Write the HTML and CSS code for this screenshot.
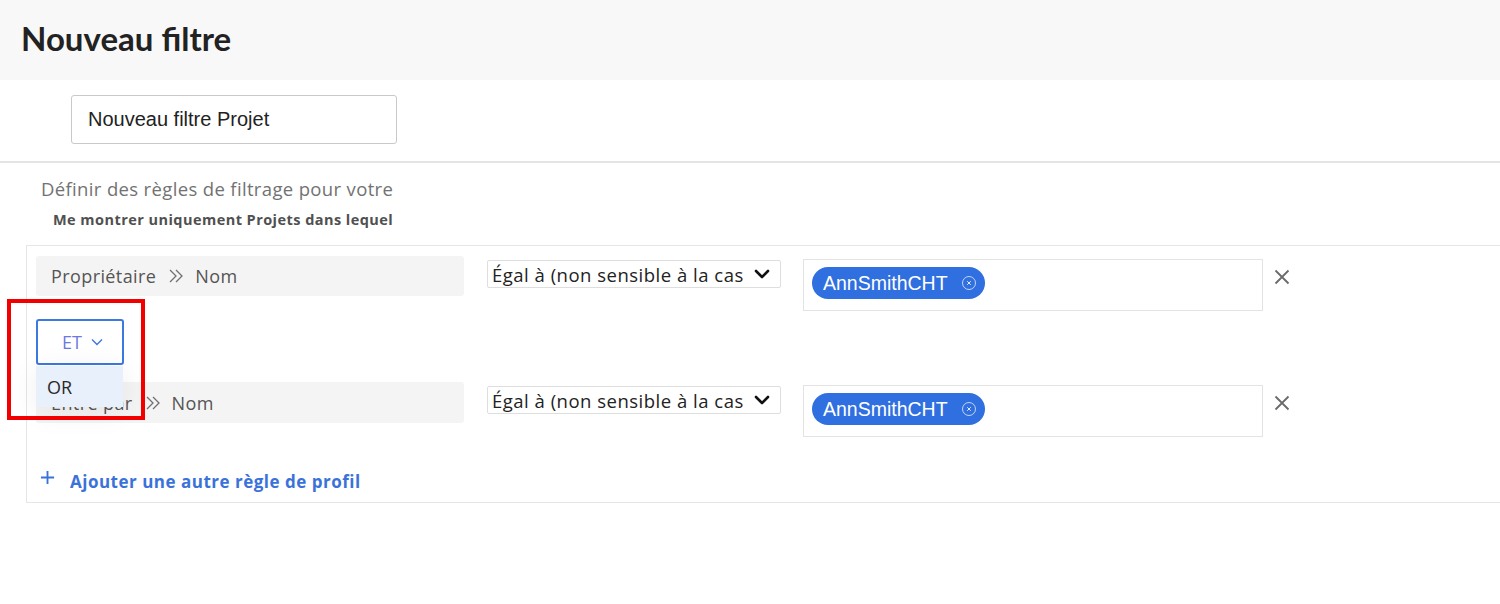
FILE: index.html
```html
<!DOCTYPE html>
<html lang="fr">
<head>
<meta charset="utf-8">
<title>Nouveau filtre</title>
<link rel="stylesheet" href="styles.css">
</head>
<body>
<header class="page-header">
  <h1 class="page-title">Nouveau filtre</h1>
</header>

<section class="name-row">
  <div class="name-input">Nouveau filtre Projet</div>
</section>

<hr class="divider">

<section class="intro">
  <p class="intro-title">Définir des règles de filtrage pour votre</p>
  <p class="intro-sub">Me montrer uniquement Projets dans lequel</p>
</section>

<section class="rules">
  <div class="rule">
    <div class="field">
      <span>Propriétaire</span>
      <svg class="sep" viewBox="0 0 16 16" width="16" height="16"><path d="M2 2 L8 8 L2 14 M8 2 L14 8 L8 14" fill="none" stroke="#707070" stroke-width="1.3"/></svg>
      <span>Nom</span>
    </div>
    <div class="operator">
      <span class="op-text">Égal à (non sensible à la cas</span>
      <svg class="op-chevron" viewBox="0 0 16 10" width="16" height="10"><path d="M2 2 L8 8 L14 2" fill="none" stroke="#111" stroke-width="2.6" stroke-linecap="round" stroke-linejoin="round"/></svg>
    </div>
    <div class="values">
      <span class="pill">AnnSmithCHT
        <svg class="pill-x" viewBox="0 0 16 16" width="16" height="16"><circle cx="8" cy="8" r="6.5" fill="none" stroke="rgba(255,255,255,0.7)" stroke-width="1"/><path d="M6.2 6.2 L9.8 9.8 M9.8 6.2 L6.2 9.8" stroke="rgba(255,255,255,0.85)" stroke-width="1"/></svg>
      </span>
    </div>
    <svg class="remove" viewBox="0 0 16 16" width="16" height="16"><path d="M1.5 1.5 L14.5 14.5 M14.5 1.5 L1.5 14.5" stroke="#6a6a6a" stroke-width="1.8"/></svg>
  </div>

  <div class="connector">
    <div class="conj">
      <span class="conj-text">ET</span>
      <svg class="conj-chevron" viewBox="0 0 12 8" width="12" height="8"><path d="M1 1.5 L6 6.5 L11 1.5" fill="none" stroke="#3b78e0" stroke-width="1.4"/></svg>
    </div>
    <div class="conj-menu">OR</div>
  </div>

  <div class="rule rule-second">
    <div class="field">
      <span>Entré par</span>
      <svg class="sep" viewBox="0 0 16 16" width="16" height="16"><path d="M2 2 L8 8 L2 14 M8 2 L14 8 L8 14" fill="none" stroke="#707070" stroke-width="1.3"/></svg>
      <span>Nom</span>
    </div>
    <div class="operator">
      <span class="op-text">Égal à (non sensible à la cas</span>
      <svg class="op-chevron" viewBox="0 0 16 10" width="16" height="10"><path d="M2 2 L8 8 L14 2" fill="none" stroke="#111" stroke-width="2.6" stroke-linecap="round" stroke-linejoin="round"/></svg>
    </div>
    <div class="values">
      <span class="pill">AnnSmithCHT
        <svg class="pill-x" viewBox="0 0 16 16" width="16" height="16"><circle cx="8" cy="8" r="6.5" fill="none" stroke="rgba(255,255,255,0.7)" stroke-width="1"/><path d="M6.2 6.2 L9.8 9.8 M9.8 6.2 L6.2 9.8" stroke="rgba(255,255,255,0.85)" stroke-width="1"/></svg>
      </span>
    </div>
    <svg class="remove" viewBox="0 0 16 16" width="16" height="16"><path d="M1.5 1.5 L14.5 14.5 M14.5 1.5 L1.5 14.5" stroke="#6a6a6a" stroke-width="1.8"/></svg>
  </div>

  <div class="add-rule">
    <svg class="plus" viewBox="0 0 16 16" width="15" height="15"><path d="M8 1 V15 M1 8 H15" stroke="#3a73d8" stroke-width="2"/></svg>
    <span>Ajouter une autre règle de profil</span>
  </div>
</section>

<div class="highlight"></div>
</body>
</html>
```

FILE: styles.css
```css
* { box-sizing: border-box; }

html, body {
  margin: 0;
  padding: 0;
  background: #ffffff;
  font-family: "Open Sans", Lato, sans-serif;
  color: #2c2c2c;
  overflow: hidden;
}

body { position: relative; width: 1500px; height: 604px; }

.page-header {
  height: 80px;
  background: #f8f8f8;
  display: flex;
  align-items: center;
  padding-left: 21px;
}

.page-title {
  margin: 0;
  font-family: Lato, "Open Sans", sans-serif;
  font-size: 33px;
  font-weight: 700;
  color: #222;
  position: relative;
  top: -2px;
}

.name-row {
  padding: 15px 0 0 71px;
}

.name-input {
  width: 326px;
  height: 49px;
  border: 1px solid #c9c9c9;
  border-radius: 3px;
  display: flex;
  align-items: center;
  padding-left: 16px;
  font-family: "Liberation Sans", Arial, sans-serif;
  font-size: 20px;
  color: #222;
}

.divider {
  margin: 17px 0 0 0;
  border: 0;
  border-top: 2px solid #e4e4e4;
  height: 0;
}

.intro { padding-left: 41px; }

.intro-title {
  margin: 14px 0 0 0;
  font-size: 18.5px;
  letter-spacing: 0.35px;
  color: #727272;
  line-height: 24px;
}

.intro-sub {
  margin: 10px 0 0 12px;
  font-size: 14.5px;
  letter-spacing: 0.45px;
  font-weight: 700;
  color: #505050;
  line-height: 18px;
}

.rules {
  margin: 16px 0 0 26px;
  width: 1500px;
  height: 258px;
  border: 1px solid #e6e6e6;
  padding: 10px 0 0 9px;
  position: relative;
}

.rule {
  display: flex;
  align-items: flex-start;
}

.field {
  width: 428px;
  height: 40px;
  background: #f4f4f4;
  border-radius: 3px;
  display: flex;
  align-items: center;
  padding-left: 15px;
  font-size: 18px;
  letter-spacing: 0.4px;
  color: #555;
}

.sep {
  margin: 0 11px 0 12px;
  flex: none;
}

.operator {
  margin: 4px 0 0 23px;
  width: 294px;
  height: 28px;
  border: 1px solid #dedede;
  border-radius: 2px;
  display: flex;
  align-items: center;
  justify-content: space-between;
  padding: 0 10px 0 4px;
  font-size: 18.5px;
  letter-spacing: 0.5px;
  color: #222;
  overflow: hidden;
}

.op-text { white-space: nowrap; }
.op-chevron { flex: none; }

.values {
  margin: 3px 0 0 22px;
  width: 460px;
  height: 52px;
  border: 1px solid #e3e3e3;
  padding: 7px 0 0 8px;
}

.pill {
  display: inline-flex;
  align-items: center;
  height: 32px;
  width: 173px;
  border-radius: 16px;
  background: #2f6fdf;
  color: #fff;
  font-family: "Liberation Sans", Arial, sans-serif;
  font-size: 19.5px;
  padding-left: 11px;
  gap: 13px;
}

.pill-x { flex: none; }

.remove {
  margin: 13px 0 0 11px;
  flex: none;
}

.connector {
  position: relative;
  height: 71px;
  padding-top: 8px;
}

.conj {
  width: 88px;
  height: 46px;
  border: 2px solid #3b78e0;
  border-radius: 3px;
  display: flex;
  align-items: center;
  padding-left: 24px;
  gap: 9px;
  font-size: 18px;
  background: #fff;
}

.conj-text { color: #6f78e0; }

.conj-menu {
  position: absolute;
  left: 0;
  top: 55px;
  width: 87px;
  height: 41px;
  background: #e8f0fc;
  box-shadow: 0 4px 30px rgba(0,0,0,0.07);
  display: flex;
  align-items: center;
  padding-left: 11px;
  font-size: 18px;
  color: #2a2a2a;
  z-index: 2;
}

.rule-second .field { height: 41px; }

.add-rule {
  margin: 34px 0 0 4px;
  display: flex;
  align-items: center;
  gap: 15px;
  color: #3b72d9;
  font-weight: 700;
  font-size: 17px;
  letter-spacing: 0.5px;
  line-height: 22px;
}

.plus { position: relative; top: -5px; flex: none; }

.highlight {
  position: absolute;
  left: 7px;
  top: 299px;
  width: 138px;
  height: 121px;
  border: 4px solid #f20000;
  z-index: 5;
}
```
